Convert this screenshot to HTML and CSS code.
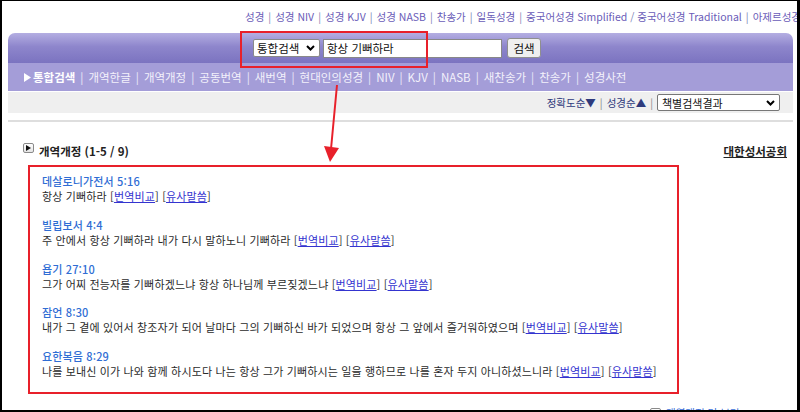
FILE: index.html
```html
<!DOCTYPE html>
<html lang="ko">
<head>
    <meta charset="UTF-8">
    <meta name="viewport" content="width=device-width, initial-scale=1.0">
    <title>통합검색 - 항상 기뻐하라</title>
    <link rel="stylesheet" href="styles.css">
</head>
<body>
    <div class="page">
        <div class="toplinks">
            <a href="#">성경</a><span class="sep">|</span><a href="#">성경 NIV</a><span class="sep">|</span><a href="#">성경 KJV</a><span class="sep">|</span><a href="#">성경 NASB</a><span class="sep">|</span><a href="#">찬송가</a><span class="sep">|</span><a href="#">일독성경</a><span class="sep">|</span><a href="#">중국어성경 Simplified</a> / <a href="#">중국어성경 Traditional</a><span class="sep">|</span><a href="#">아제르성경</a>
        </div>

        <div class="header">
            <form class="search" onsubmit="return false">
                <span class="select-wrap">
                    <select class="kind"><option>통합검색</option></select>
                    <svg class="chev" width="9" height="6" viewBox="0 0 9 6"><polyline points="1,1 4.5,4.5 8,1" fill="none" stroke="#000" stroke-width="2"/></svg>
                </span>
                <input class="query" type="text" value="항상 기뻐하라">
                <button class="go">검색</button>
            </form>
            <div class="nav">
                <svg class="tri" width="7" height="9" viewBox="0 0 7 9"><polygon points="0,0 7,4.5 0,9" fill="#fff"/></svg>
                <span class="current">통합검색</span><span class="sep">|</span><a href="#">개역한글</a><span class="sep">|</span><a href="#">개역개정</a><span class="sep">|</span><a href="#">공동번역</a><span class="sep">|</span><a href="#">새번역</a><span class="sep">|</span><a href="#">현대인의성경</a><span class="sep">|</span><a href="#">NIV</a><span class="sep">|</span><a href="#">KJV</a><span class="sep">|</span><a href="#">NASB</a><span class="sep">|</span><a href="#">새찬송가</a><span class="sep">|</span><a href="#">찬송가</a><span class="sep">|</span><a href="#">성경사전</a>
            </div>
        </div>

        <div class="sortbar">
            <a href="#">정확도순▼</a><span class="sep">|</span><a href="#">성경순▲</a><span class="sep">|</span>
            <span class="select-wrap">
                <select class="group"><option>책별검색결과</option></select>
                <svg class="chev" width="9" height="6" viewBox="0 0 9 6"><polyline points="1,1 4.5,4.5 8,1" fill="none" stroke="#000" stroke-width="2"/></svg>
            </span>
        </div>
        <div class="rule"></div>

        <div class="section">
            <div class="section-head">
                <span class="box-icon"><svg width="5" height="6" viewBox="0 0 5 6"><polygon points="0,0 5,3 0,6" fill="#111"/></svg></span>
                <h2>개역개정 (1-5 / 9)</h2>
                <a class="publisher" href="#">대한성서공회</a>
            </div>

            <ul class="results">
                <li>
                    <a class="verse-title" href="#">데살로니가전서 5:16</a>
                    <div class="verse-text">항상 기뻐하라 [<a href="#">번역비교</a>] [<a href="#">유사말씀</a>]</div>
                </li>
                <li>
                    <a class="verse-title" href="#">빌립보서 4:4</a>
                    <div class="verse-text">주 안에서 항상 기뻐하라 내가 다시 말하노니 기뻐하라 [<a href="#">번역비교</a>] [<a href="#">유사말씀</a>]</div>
                </li>
                <li>
                    <a class="verse-title" href="#">욥기 27:10</a>
                    <div class="verse-text">그가 어찌 전능자를 기뻐하겠느냐 항상 하나님께 부르짖겠느냐 [<a href="#">번역비교</a>] [<a href="#">유사말씀</a>]</div>
                </li>
                <li>
                    <a class="verse-title" href="#">잠언 8:30</a>
                    <div class="verse-text">내가 그 곁에 있어서 창조자가 되어 날마다 그의 기뻐하신 바가 되었으며 항상 그 앞에서 즐거워하였으며 [<a href="#">번역비교</a>] [<a href="#">유사말씀</a>]</div>
                </li>
                <li>
                    <a class="verse-title" href="#">요한복음 8:29</a>
                    <div class="verse-text">나를 보내신 이가 나와 함께 하시도다 나는 항상 그가 기뻐하시는 일을 행하므로 나를 혼자 두지 아니하셨느니라 [<a href="#">번역비교</a>] [<a href="#">유사말씀</a>]</div>
                </li>
            </ul>

            <div class="more">
                <span class="box-icon"><svg width="5" height="6" viewBox="0 0 5 6"><polygon points="0,0 5,3 0,6" fill="#111"/></svg></span>
                <a href="#">개역개정 더 보기</a>
            </div>
        </div>

        <!-- annotation marks -->
        <div class="note-box"></div>
        <svg class="note-arrow" width="24" height="82" viewBox="0 0 24 82">
            <line x1="17" y1="2" x2="11" y2="66" stroke="#e8202a" stroke-width="2"/>
            <polygon points="4,63 19,65 10,79" fill="#e8202a"/>
        </svg>
    </div>
</body>
</html>
```

FILE: styles.css
```css
* {
    box-sizing: border-box;
}
body {
    margin: 0;
    font-family: "Noto Sans CJK KR", "Noto Sans", sans-serif;
    font-size: 10.5px;
    color: #333;
    background: #fff;
}
a {
    text-decoration: none;
}
.page {
    position: relative;
    height: 412px;
    border-style: solid;
    border-color: #000;
    border-width: 1px 3px 2px 2px;
    overflow: hidden;
}

/* top link line */
.toplinks {
    height: 32px;
    line-height: 31px;
    padding-left: 243px;
    white-space: nowrap;
    overflow: hidden;
    color: #7d82b4;
}
.toplinks a {
    color: #6a5cb8;
}
.toplinks .sep {
    margin: 0 4px;
}

/* purple header */
.header {
    margin: 0 4px 0 6px;
    border-radius: 7px 7px 0 0;
    overflow: hidden;
}
.search {
    height: 30px;
    margin: 0;
    padding-right: 7px;
    display: flex;
    align-items: center;
    justify-content: center;
    gap: 3px;
    background: linear-gradient(#b4aee2, #8e86cc 45%, #7b73c0);
}
.select-wrap {
    position: relative;
    display: inline-block;
}
.select-wrap .chev {
    position: absolute;
    right: 5px;
    top: 50%;
    margin-top: -3px;
    pointer-events: none;
}
select {
    appearance: none;
    -webkit-appearance: none;
    display: block;
    margin: 0;
    background: #fff;
    border: 1px solid #8a8a8a;
    border-radius: 2px;
    font-family: inherit;
    color: #111;
}
.kind {
    width: 67px;
    height: 18px;
    padding: 0 0 0 3px;
    font-size: 11.5px;
}
.query {
    width: 179px;
    height: 19px;
    margin: 0;
    padding: 0 3px;
    border: 1px solid #888;
    font-family: inherit;
    font-size: 11.5px;
    color: #111;
}
.go {
    width: 34px;
    height: 20px;
    margin-left: 2px;
    padding: 0;
    background: #efefef;
    border: 1px solid #8f8f8f;
    border-radius: 3px;
    font-family: inherit;
    font-size: 11.5px;
    color: #111;
}
.nav {
    height: 28px;
    padding-left: 16px;
    display: flex;
    align-items: center;
    background: #a49dd8;
    color: #eceaf8;
    font-size: 11.5px;
    white-space: nowrap;
}
.nav .tri {
    margin-right: 2px;
}
.nav .current {
    font-weight: bold;
    color: #fff;
}
.nav a {
    color: #f3f1fb;
}
.nav .sep {
    margin: 0 5px;
}

/* sort bar */
.sortbar {
    margin: 1px 4px 0 6px;
    height: 21px;
    padding-right: 13px;
    display: flex;
    align-items: center;
    justify-content: flex-end;
    background: #efefef;
    color: #888;
}
.sortbar a {
    color: #2e3a7c;
}
.sortbar .sep {
    margin: 0 4px;
}
.group {
    width: 123px;
    height: 17px;
    padding: 0 0 0 4px;
    border-color: #777;
    font-size: 11px;
}
.rule {
    margin: 7px 4px 0 6px;
    height: 2px;
    background: #dedede;
}

/* result section */
.section {
    padding: 0 10px 0 21px;
}
.section-head {
    margin-top: 21px;
    height: 15px;
    display: flex;
    align-items: center;
}
.box-icon {
    width: 11px;
    height: 10px;
    margin: 0 5px 6px 0;
    display: flex;
    align-items: center;
    justify-content: center;
    border: 1px solid #8a8a8a;
    border-radius: 2px;
    background: linear-gradient(#fff, #e4e4e4);
}
.section-head h2 {
    margin: 0;
    font-size: 11.5px;
    font-weight: bold;
    color: #222;
}
.publisher {
    margin-left: auto;
    font-size: 11.5px;
    font-weight: bold;
    color: #222;
    text-decoration: underline;
}
.results {
    list-style: none;
    width: 651px;
    margin: 7px 0 0 5px;
    padding: 7px 12px 13px;
    border: 2px solid #e8202a;
    font-size: 11px;
    letter-spacing: 0.15px;
}
.results li + li {
    margin-top: 13.75px;
}
.verse-title {
    display: block;
    line-height: 15px;
    font-weight: 500;
    color: #2f6dd4;
}
.verse-text {
    line-height: 15px;
    color: #2b2b2b;
    white-space: nowrap;
}
.verse-text a {
    color: #3434cf;
    text-decoration: underline;
}
.more {
    margin: 11px 0 0 627px;
    display: flex;
    align-items: center;
    white-space: nowrap;
}
.more .box-icon {
    margin-bottom: 0;
}
.more a {
    color: #3a6fd8;
}

/* red annotation marks */
.note-box {
    position: absolute;
    left: 238px;
    top: 30px;
    width: 188px;
    height: 37px;
    border: 2px solid #e8202a;
}
.note-arrow {
    position: absolute;
    left: 318px;
    top: 82px;
}
```
